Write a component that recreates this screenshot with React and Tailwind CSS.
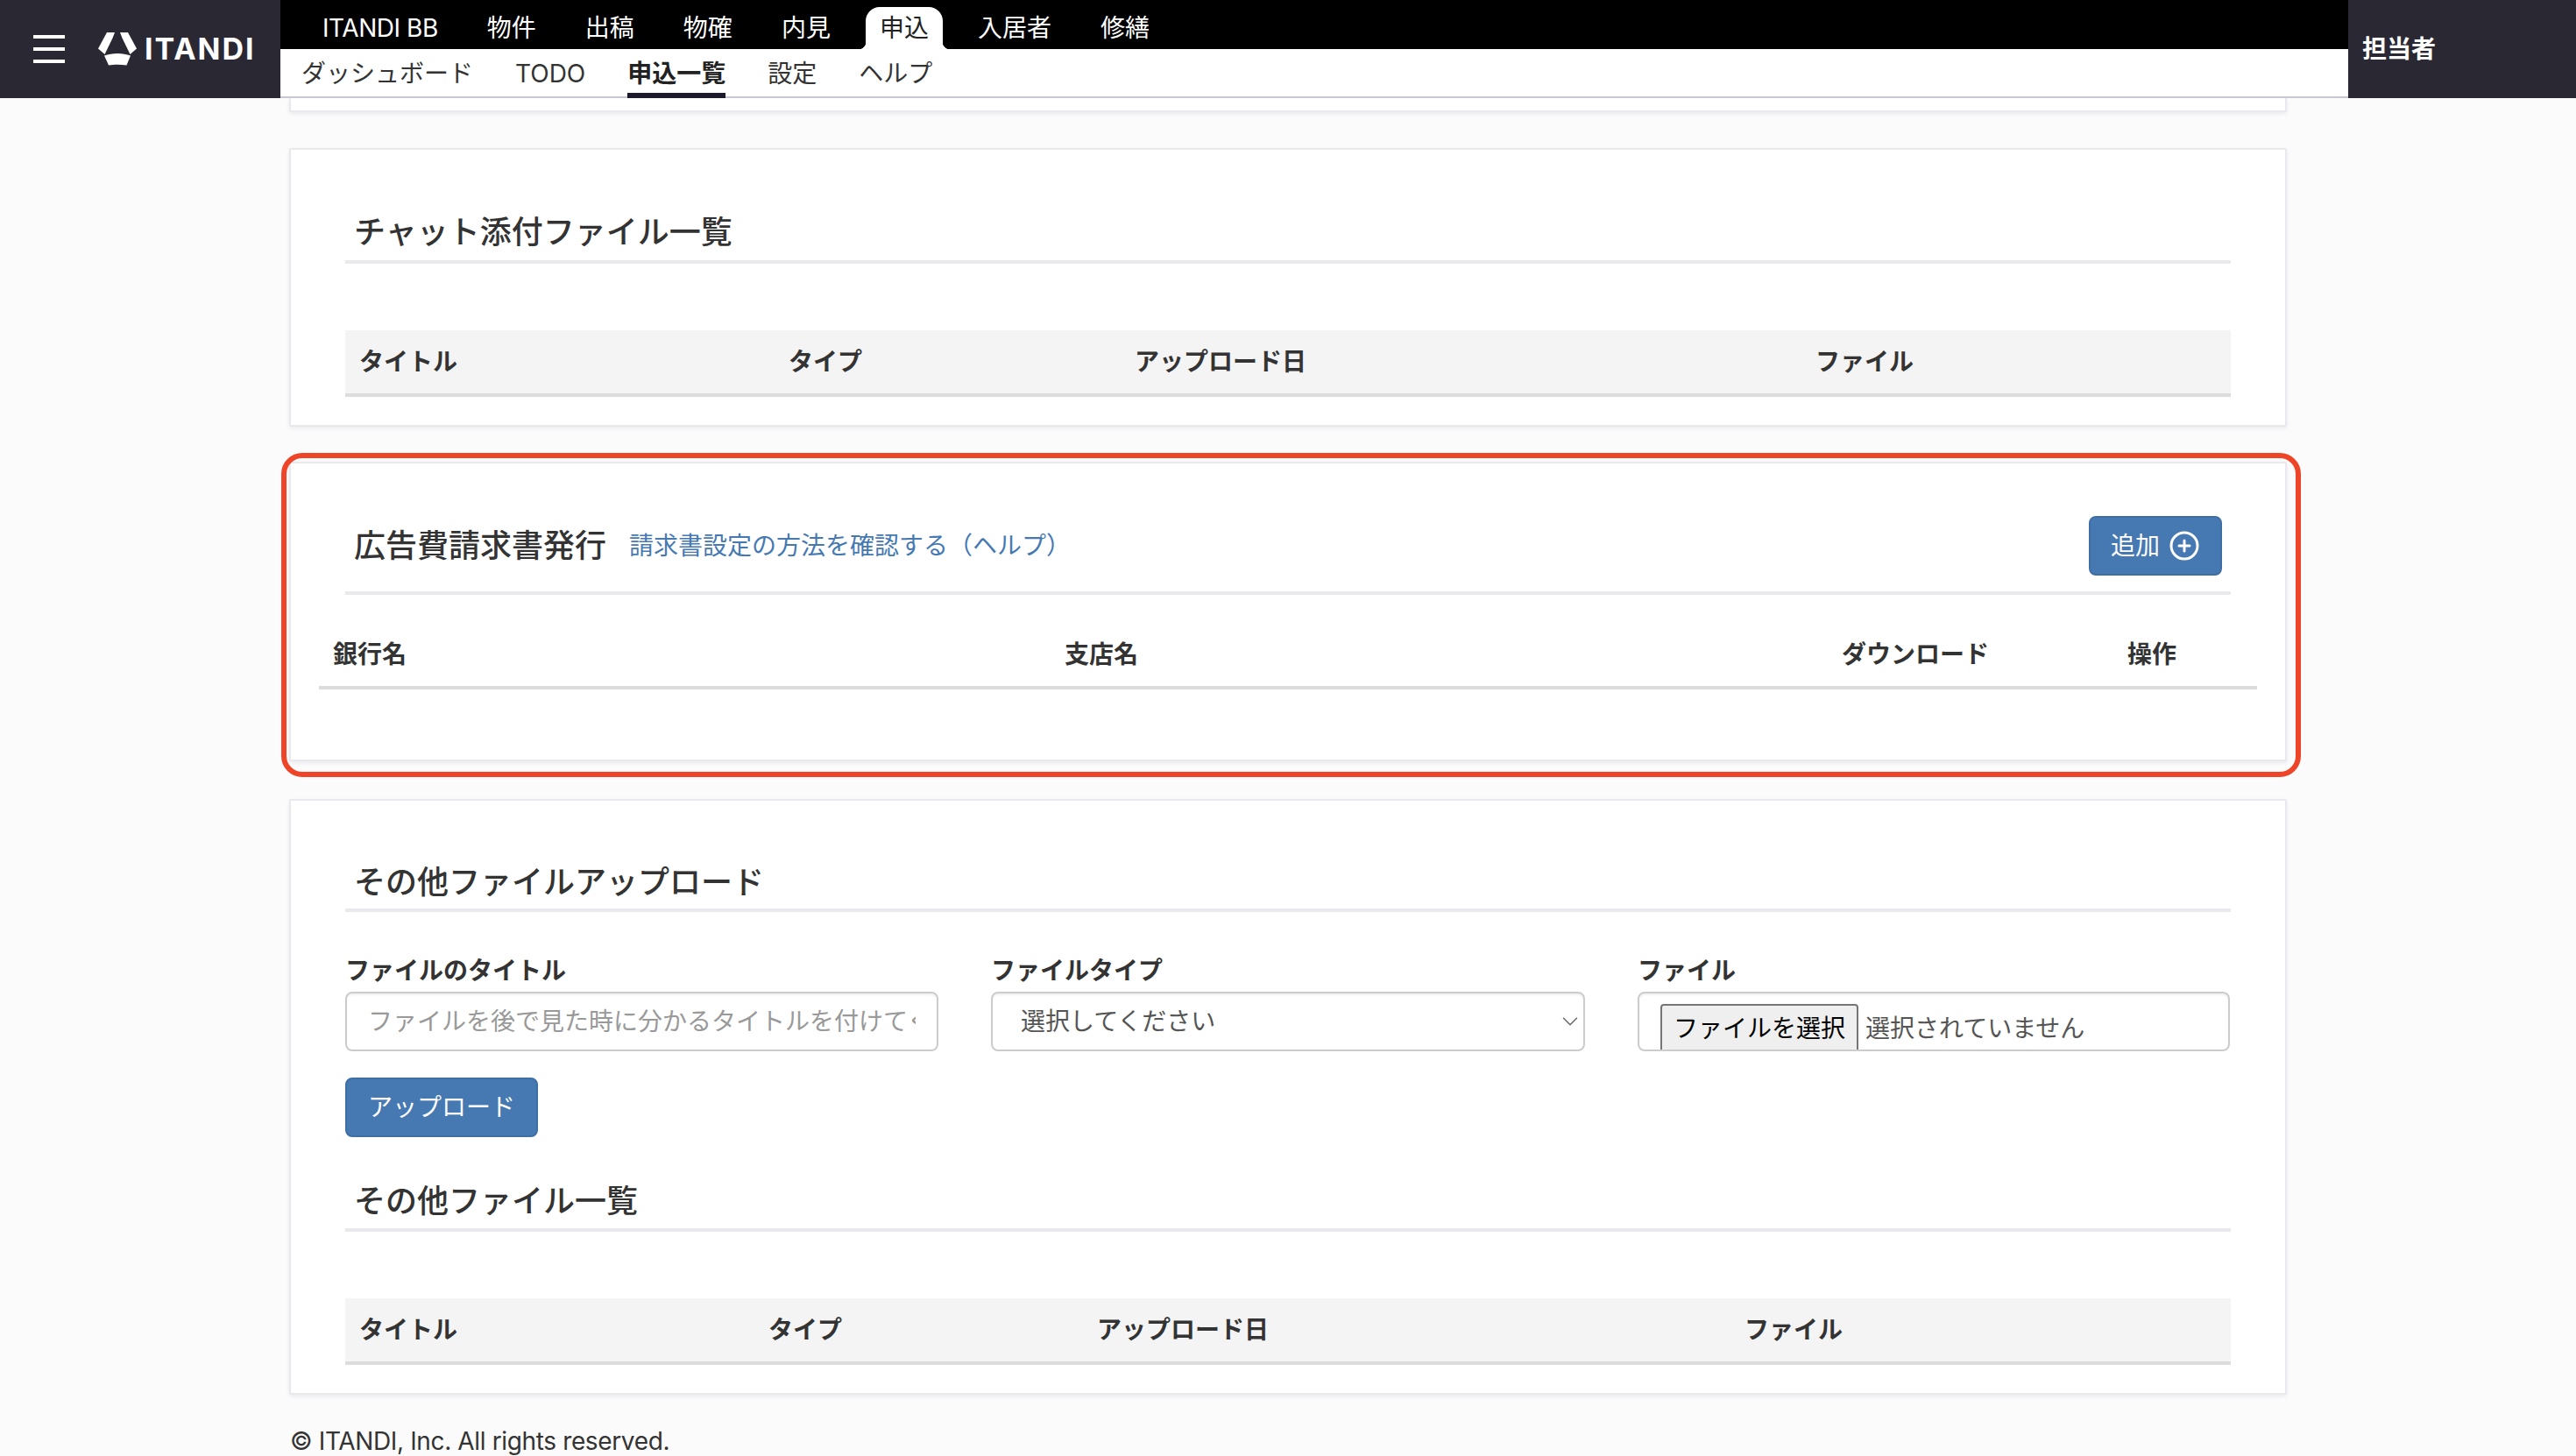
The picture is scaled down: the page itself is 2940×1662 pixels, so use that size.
import React from "react";
import { CirclePlus, ChevronDown } from "lucide-react";

const topTabs = ["物件", "出稿", "物確", "内見", "申込", "入居者", "修繕"];
const subTabs = ["ダッシュボード", "TODO", "申込一覧", "設定", "ヘルプ"];

function Logo() {
  return (
    <div className="flex items-center">
      <svg width="44" height="38" viewBox="0 0 44 38" className="shrink-0">
        <path fill="#fff" d="M10 0H19L16.500 6.500L7.500 25L0 18.500Z" />
        <path fill="#fff" d="M25 0H34L44 18.500L36.500 25L27.500 6.500Z" />
        <path fill="#fff" d="M7 26.500C16 23 28 23 37 26.500L32.500 37.500C26 36.500 18 36.500 12 37.500Z" />
      </svg>
      <span className="ml-[9px] text-[34px] font-bold leading-none tracking-[2px] text-white">ITANDI</span>
    </div>
  );
}

function Header() {
  return (
    <header className="flex h-[112px] w-full">
      <div className="flex w-[320px] shrink-0 items-center bg-[#2a2833] pl-[38px]">
        <div className="flex h-[32px] w-[36px] flex-col justify-between">
          <span className="block h-[4px] bg-white" />
          <span className="block h-[4px] bg-white" />
          <span className="block h-[4px] bg-white" />
        </div>
        <div className="ml-[38px]">
          <Logo />
        </div>
      </div>
      <div className="flex min-w-0 flex-1 flex-col">
        <nav className="flex h-[56px] items-end gap-[24px] bg-black pl-[32px] text-[28px] leading-none text-white">
          <span className="flex h-[48px] items-center px-[16px] tracking-[-0.45px]">ITANDI BB</span>
          {topTabs.map((t) =>
            t === "申込" ? (
              <span key={t} className="relative flex h-[48px] items-center rounded-t-[16px] bg-white px-[16px] text-[#222]">
                {t}
                <span className="absolute bottom-0 left-[-8px] h-[8px] w-[8px] bg-[radial-gradient(circle_at_0_0,#000_8px,#fff_8.500px)]" />
                <span className="absolute bottom-0 right-[-8px] h-[8px] w-[8px] bg-[radial-gradient(circle_at_100%_0,#000_8px,#fff_8.500px)]" />
              </span>
            ) : (
              <span key={t} className="flex h-[48px] items-center px-[16px]">{t}</span>
            )
          )}
        </nav>
        <nav className="flex h-[56px] items-stretch gap-[48px] border-b-[2px] border-[#c8c8d0] bg-white pl-[24px] text-[28px] leading-none text-[#333]">
          {subTabs.map((t) =>
            t === "申込一覧" ? (
              <span key={t} className="relative flex items-center pt-[2px] font-bold text-[#222]">
                {t}
                <span className="absolute bottom-[-2px] left-0 right-0 h-[6px] bg-[#1d1a2b]" />
              </span>
            ) : (
              <span key={t} className="flex items-center pt-[2px]">{t}</span>
            )
          )}
        </nav>
      </div>
      <div className="flex w-[260px] shrink-0 items-center bg-[#2a2833] pl-[16px] text-[28px] font-bold text-white">担当者</div>
    </header>
  );
}

function Card({ className = "", children }) {
  return (
    <section className={`rounded-[2px] border-[2px] border-[#e8e8ed] bg-white shadow-[0_2px_4px_rgba(40,40,60,0.08)] ${className}`}>
      {children}
    </section>
  );
}

function Heading({ className = "", children }) {
  return (
    <h2 className={`flex items-center border-b-[4px] border-[#e8e8ed] pl-[10px] pt-[3px] text-[36px] font-medium leading-none text-[#333] ${className}`}>
      {children}
    </h2>
  );
}

function FileTable({ columns, gridClass }) {
  return (
    <div className={`grid h-[76px] items-center border-b-[4px] border-[#dcdcdc] bg-[#f4f4f4] text-[28px] font-bold leading-none text-[#333] ${gridClass}`}>
      {columns.map((c) => (
        <div key={c} className="pl-[16px]">{c}</div>
      ))}
    </div>
  );
}

const fieldBox = "h-[68px] rounded-[8px] border-[2px] border-[#cccccc] bg-white text-[28px] shadow-[inset_0_2px_2px_rgba(0,0,0,0.06)]";

function Field({ label, children }) {
  return (
    <div className="flex flex-col">
      <label className="flex h-[44px] items-start pt-[2px] text-[28px] font-bold leading-[36px] text-[#333]">{label}</label>
      {children}
    </div>
  );
}

export default function App() {
  const cols = ["タイトル", "タイプ", "アップロード日", "ファイル"];
  return (
    <div className="h-[1662px] w-full overflow-hidden bg-[#fbfbfc] font-['Inter','Noto_Sans_CJK_JP',sans-serif]">
      <Header />
      <main className="mx-auto w-[2280px]">
        <div className="h-[16px] rounded-b-[2px] border-x-[2px] border-b-[2px] border-[#e8e8ed] bg-white shadow-[0_2px_4px_rgba(40,40,60,0.08)]" />

        <Card className="mt-[41px] px-[62px] pb-[32px] pt-[58px]">
          <Heading className="h-[72px]">チャット添付ファイル一覧</Heading>
          <div className="mt-[76px]">
            <FileTable columns={cols} gridClass="grid-cols-[490px_395px_777px_490px]" />
          </div>
        </Card>

        <div className="relative mt-[40px]">
          <Card className="px-[32px] pb-[80px] pt-[40px]">
            <div className="mx-[30px] flex h-[110px] items-center justify-between border-b-[4px] border-[#e8e8ed] pl-[10px] pr-[10px] pt-[2px]">
              <div className="flex items-center">
                <h2 className="text-[36px] font-medium leading-none text-[#333]">広告費請求書発行</h2>
                <a className="ml-[26px] text-[28px] leading-none text-[#4679b2]">請求書設定の方法を確認する（ヘルプ）</a>
              </div>
              <button className="flex h-[68px] w-[152px] items-center justify-center gap-[10px] rounded-[8px] border-[2px] border-[#3f6ea5] bg-[#4679b2] text-[28px] leading-none text-white">
                追加
                <CirclePlus size={36} strokeWidth={2} />
              </button>
            </div>
            <div className="mt-[30px] grid h-[78px] grid-cols-[835px_887px_326px_164px] items-center border-b-[4px] border-[#dcdcdc] pt-[1px] text-[28px] font-bold leading-none text-[#333]">
              <div className="pl-[16px]">銀行名</div>
              <div className="pl-[16px]">支店名</div>
              <div className="pl-[16px]">ダウンロード</div>
              <div className="pl-[16px]">操作</div>
            </div>
          </Card>
          <div className="pointer-events-none absolute bottom-[-18px] left-[-9px] right-[-16px] top-[-10px] rounded-[24px] border-[6px] border-[#ee4528]" />
        </div>

        <Card className="mt-[43px] px-[62px] pb-[32px] pt-[59px]">
          <Heading className="h-[68px]">その他ファイルアップロード</Heading>
          <div className="mt-[47px] grid grid-cols-[677px_678px_676px] gap-x-[60px]">
            <Field label="ファイルのタイトル">
              <input
                readOnly
                placeholder="ファイルを後で見た時に分かるタイトルを付けてください"
                className={`${fieldBox} px-[24px] leading-none text-[#555] outline-none placeholder:text-[#999]`}
              />
            </Field>
            <Field label="ファイルタイプ">
              <div className="relative">
                <select className={`${fieldBox} w-full appearance-none pl-[32px] pr-[40px] text-[#555] outline-none`}>
                  <option>選択してください</option>
                </select>
                <ChevronDown size={30} strokeWidth={1.2} className="pointer-events-none absolute right-[2px] top-[19px] text-[#666]" />
              </div>
            </Field>
            <Field label="ファイル">
              <div className={`${fieldBox} flex items-start overflow-hidden pl-[24px] pt-[12px] text-[#555]`}>
                <span className="flex h-[60px] w-[226px] shrink-0 items-start justify-center rounded-[4px] border-[2px] border-[#767676] bg-[#efefef] pt-[8px] leading-[36px] text-black">ファイルを選択</span>
                <span className="ml-[8px] pt-[10px] leading-[36px]">選択されていません</span>
              </div>
            </Field>
          </div>
          <button className="mt-[30px] flex h-[68px] w-[220px] items-center justify-center rounded-[8px] border-[2px] border-[#3f6ea5] bg-[#4679b2] text-[28px] leading-none text-white">
            アップロード
          </button>
          <Heading className="mt-[38px] h-[70px]">その他ファイル一覧</Heading>
          <div className="mt-[76px]">
            <FileTable columns={cols} gridClass="grid-cols-[467px_375px_739px_571px]" />
          </div>
        </Card>

        <footer className="mt-[38px] h-[30px] pl-[1px] text-[28px] leading-[30px] tracking-[-0.36px] text-[#333]">© ITANDI, Inc. All rights reserved.</footer>
      </main>
    </div>
  );
}
